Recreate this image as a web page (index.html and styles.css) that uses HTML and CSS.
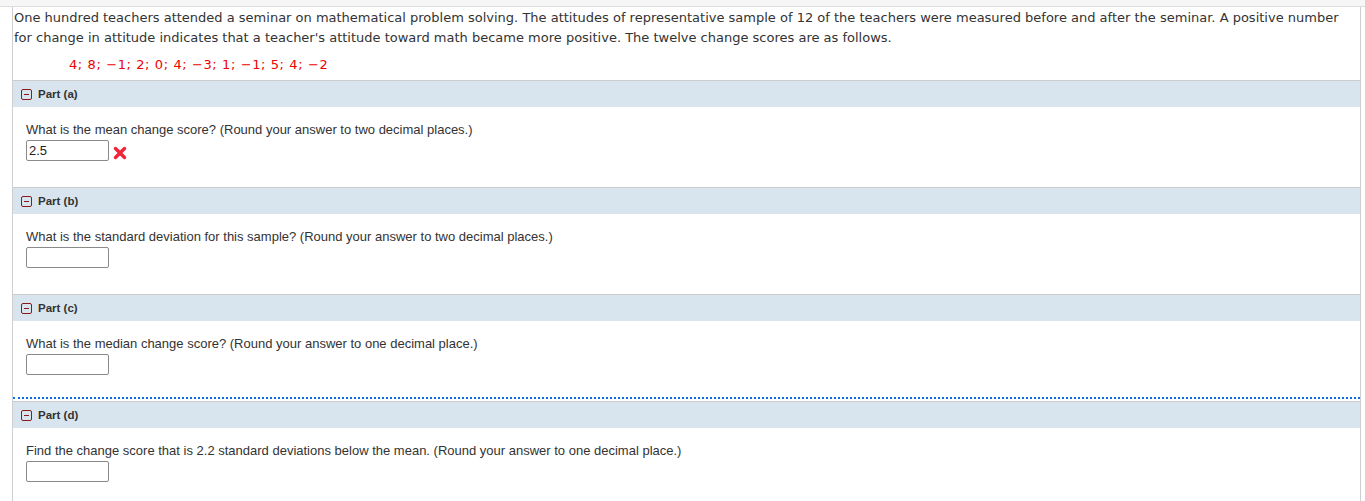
FILE: index.html
```html
<!DOCTYPE html>
<html>
<head>
<meta charset="utf-8">
<link rel="stylesheet" href="styles.css">
</head>
<body>
<div class="topband"></div>
<div class="frame">
  <div class="intro">
    <p class="stem">One hundred teachers attended a seminar on mathematical problem solving. The attitudes of representative sample of 12 of the teachers were measured before and after the seminar. A positive number for change in attitude indicates that a teacher's attitude toward math became more positive. The twelve change scores are as follows.</p>
    <p class="data">4; 8; &minus;1; 2; 0; 4; &minus;3; 1; &minus;1; 5; 4; &minus;2</p>
  </div>

  <div class="part">
    <div class="part-head"><span class="toggle"></span><span class="part-label">Part (a)</span></div>
    <div class="part-body">
      <p class="q">What is the mean change score? (Round your answer to two decimal places.)</p>
      <div class="answer">
        <input class="box" type="text" value="2.5">
        <svg class="wrong" width="16" height="16" viewBox="0 0 16 16"><path d="M3.5 3.5 L12.5 12.5 M12.5 3.5 L3.5 12.5" stroke="#f0253a" stroke-width="3.4" stroke-linecap="round"/></svg>
      </div>
    </div>
  </div>

  <div class="part">
    <div class="part-head"><span class="toggle"></span><span class="part-label">Part (b)</span></div>
    <div class="part-body">
      <p class="q">What is the standard deviation for this sample? (Round your answer to two decimal places.)</p>
      <div class="answer"><input class="box" type="text" value=""></div>
    </div>
  </div>

  <div class="part">
    <div class="part-head"><span class="toggle"></span><span class="part-label">Part (c)</span></div>
    <div class="part-body focus">
      <p class="q">What is the median change score? (Round your answer to one decimal place.)</p>
      <div class="answer"><input class="box" type="text" value=""></div>
    </div>
  </div>

  <div class="part">
    <div class="part-head"><span class="toggle"></span><span class="part-label">Part (d)</span></div>
    <div class="part-body">
      <p class="q">Find the change score that is 2.2 standard deviations below the mean. (Round your answer to one decimal place.)</p>
      <div class="answer"><input class="box" type="text" value=""></div>
    </div>
  </div>
</div>
</body>
</html>
```

FILE: styles.css
```css
html, body {
  margin: 0;
  padding: 0;
  background: #ffffff;
}

.topband {
  height: 6px;
  background: #f6f6f6;
  border-bottom: 1px solid #dddddd;
}

.frame {
  margin-left: 12px;
  width: 1347px;
  border-left: 1px solid #cfcfcf;
  border-right: 1px solid #cfcfcf;
  min-height: 494px;
}

.intro {
  padding: 1px 0 0 1px;
}

.stem {
  margin: 0;
  font-family: "DejaVu Sans", Verdana, sans-serif;
  font-size: 13px;
  line-height: 20px;
  color: #333333;
  padding-right: 4px;
}

.data {
  margin: 9px 0 0 55px;
  font-family: "DejaVu Sans", Verdana, sans-serif;
  font-size: 13px;
  letter-spacing: 0.6px;
  line-height: 16px;
  color: #ee0000;
  padding-bottom: 7px;
}

.part-head {
  height: 26px;
  border-top: 1px solid #cccccc;
  background: #d9e5ee;
  display: flex;
  align-items: center;
  padding-left: 8px;
}

.toggle {
  width: 9px;
  height: 9px;
  border: 1px solid #8a1a1a;
  border-radius: 2px;
  position: relative;
  margin-right: 6px;
}

.toggle::after {
  content: "";
  position: absolute;
  left: 2px;
  right: 2px;
  top: 4px;
  height: 1px;
  background: #8a1a1a;
}

.part-label {
  font-family: "Liberation Sans", Arial, sans-serif;
  font-weight: bold;
  font-size: 11.5px;
  color: #333333;
}

.part-body {
  height: 80px;
  box-sizing: border-box;
  padding: 15px 0 0 13px;
}

.part-body.focus {
  height: 78px;
  border-bottom: 2px dotted #0a6fe0;
  margin-bottom: 2px;
}

.q {
  margin: 0;
  font-family: "Liberation Sans", Arial, sans-serif;
  font-size: 13px;
  line-height: 16px;
  color: #333333;
}

.answer {
  margin-top: 2px;
  display: flex;
  align-items: center;
}

.box {
  width: 83px;
  height: 21px;
  box-sizing: border-box;
  border: 1px solid #8a8a8a;
  border-radius: 2px;
  padding: 0 2px;
  margin: 0;
  font-family: "Liberation Sans", Arial, sans-serif;
  font-size: 13px;
  color: #222222;
  background: #ffffff;
}

.wrong {
  margin-left: 3px;
  margin-top: 4px;
}
```
